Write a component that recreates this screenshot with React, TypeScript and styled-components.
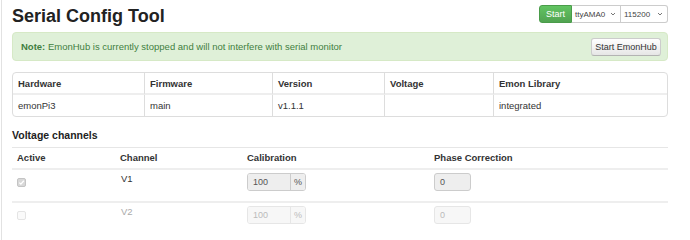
import React from "react";
import styled, { createGlobalStyle } from "styled-components";

const Global = createGlobalStyle`
  html, body { margin: 0; padding: 0; background: #fff; }
  body { font-family: "Liberation Sans", Arial, sans-serif; font-size: 9.5px; color: #333; }
  * { box-sizing: border-box; }
`;

const Page = styled.div`
  margin-left: 1px;
  border-left: 1px solid #e2e2e2;
  min-height: 240px;
  padding: 0 22px 0 10px;
`;

const Header = styled.div`
  display: flex;
  align-items: flex-start;
  justify-content: space-between;
  height: 32px;
`;

const Title = styled.h2`
  margin: 6px 0 0 0;
  font-size: 18px;
  line-height: 20px;
  font-weight: bold;
  color: #222;
`;

const Controls = styled.div`
  display: flex;
  margin-top: 5px;
`;

const StartButton = styled.button`
  height: 18px;
  width: 33px;
  padding: 0;
  border: 1px solid #4a9c4a;
  border-radius: 3px 0 0 3px;
  background: linear-gradient(#62c462, #51a351);
  color: #fff;
  font-family: inherit;
  font-size: 9px;
`;

const Select = styled.div<{ w: number }>`
  height: 18px;
  width: ${(p) => p.w}px;
  border: 1px solid #ccc;
  border-left: none;
  display: flex;
  align-items: center;
  justify-content: space-between;
  padding: 0 4px 0 3px;
  font-size: 8px;
  color: #444;
  background: #fff;
  &:last-child { border-radius: 0 3px 3px 0; }
`;

const Chevron = () => (
  <svg width="6" height="4" viewBox="0 0 6 4">
    <path d="M1 1 L3 3 L5 1" stroke="#777" strokeWidth="1" fill="none" />
  </svg>
);

const Alert = styled.div`
  height: 29px;
  background: #dff0d8;
  border: 1px solid #d6e9c6;
  border-radius: 4px;
  display: flex;
  align-items: center;
  justify-content: space-between;
  padding: 0 6px 0 8px;
  color: #3f7f3f;
  font-size: 9.5px;
`;

const AlertButton = styled.button`
  height: 18px;
  width: 70px;
  padding: 0;
  border: 1px solid #ccc;
  border-bottom-color: #b3b3b3;
  border-radius: 3px;
  background: linear-gradient(#ffffff, #e6e6e6);
  color: #333;
  font-family: inherit;
  font-size: 9px;
`;

const InfoTable = styled.table`
  margin-top: 11px;
  width: 100%;
  border-collapse: separate;
  border-spacing: 0;
  border: 1px solid #ddd;
  border-radius: 4px;
  table-layout: fixed;
`;

const InfoTh = styled.th<{ w?: number }>`
  text-align: left;
  font-weight: bold;
  height: 22px;
  padding: 0 5px;
  border-bottom: 2px solid #eee;
  ${(p) => (p.w ? `width: ${p.w}px;` : "")}
  & + & { border-left: 1px solid #ddd; }
`;

const InfoTd = styled.td`
  height: 21px;
  padding: 0 5px;
  & + & { border-left: 1px solid #ddd; }
`;

const SectionTitle = styled.h4`
  margin: 10px 0 0 0;
  font-size: 10.5px;
  line-height: 16px;
  font-weight: bold;
  color: #222;
`;

const ChanTable = styled.table`
  margin-top: 4px;
  width: 100%;
  border-collapse: collapse;
  table-layout: fixed;
`;

const ChanTh = styled.th<{ w?: number }>`
  text-align: left;
  font-weight: bold;
  height: 21px;
  padding: 0 5px;
  border-top: 1px solid #e6e6e6;
  ${(p) => (p.w ? `width: ${p.w}px;` : "")}
`;

const ChanTd = styled.td<{ off?: boolean }>`
  vertical-align: top;
  padding: 3px 5px 0 5px;
  height: 33px;
  border-top: 2px solid #eee;
  color: ${(p) => (p.off ? "#aaa" : "#333")};
`;

const ChanName = styled.div`
  line-height: 12px;
  padding-left: 1px;
`;

const Check = styled.span<{ checked?: boolean }>`
  display: block;
  margin-top: 5px;
  width: 9px;
  height: 9px;
  border: 1px solid ${(p) => (p.checked ? "#c4c4c4" : "#e4e4e4")};
  border-radius: 2px;
  background: ${(p) => (p.checked ? "#d8d8d8" : "#fafafa")};
`;

const CheckMark = () => (
  <svg width="7" height="7" viewBox="0 0 7 7" style={{ display: "block" }}>
    <path d="M1.3 3.6 L2.9 5.1 L5.8 1.8" stroke="#fff" strokeWidth="1.3" fill="none" />
  </svg>
);

const InputGroup = styled.div<{ off?: boolean }>`
  display: flex;
  width: 59px;
  height: 18px;
  border: 1px solid ${(p) => (p.off ? "#e6e6e6" : "#ccc")};
  border-radius: 3px;
  overflow: hidden;
  font-size: 9px;
  color: ${(p) => (p.off ? "#bbb" : "#555")};
`;

const InputField = styled.div<{ off?: boolean; w: number }>`
  width: ${(p) => p.w}px;
  background: ${(p) => (p.off ? "#f7f7f7" : "#eee")};
  padding-left: 5px;
  line-height: 16px;
`;

const Addon = styled.div<{ off?: boolean }>`
  flex: 1;
  border-left: 1px solid ${(p) => (p.off ? "#e6e6e6" : "#ccc")};
  background: ${(p) => (p.off ? "#f7f7f7" : "#eee")};
  text-align: center;
  line-height: 16px;
`;

const PhaseInput = styled.div<{ off?: boolean }>`
  width: 37px;
  height: 18px;
  border: 1px solid ${(p) => (p.off ? "#e6e6e6" : "#ccc")};
  border-radius: 3px;
  background: ${(p) => (p.off ? "#f7f7f7" : "#eee")};
  font-size: 9px;
  line-height: 16px;
  padding-left: 5px;
  color: ${(p) => (p.off ? "#bbb" : "#555")};
`;

const channels = [
  { name: "V1", active: true },
  { name: "V2", active: false },
];

export default function App() {
  return (
    <>
      <Global />
      <Page>
        <Header>
          <Title>Serial Config Tool</Title>
          <Controls>
            <StartButton>Start</StartButton>
            <Select w={49}>
              ttyAMA0 <Chevron />
            </Select>
            <Select w={47}>
              115200 <Chevron />
            </Select>
          </Controls>
        </Header>
        <Alert>
          <span>
            <b>Note:</b> EmonHub is currently stopped and will not interfere with serial monitor
          </span>
          <AlertButton>Start EmonHub</AlertButton>
        </Alert>
        <InfoTable>
          <thead>
            <tr>
              <InfoTh w={131}>Hardware</InfoTh>
              <InfoTh w={128}>Firmware</InfoTh>
              <InfoTh w={112}>Version</InfoTh>
              <InfoTh w={109}>Voltage</InfoTh>
              <InfoTh>Emon Library</InfoTh>
            </tr>
          </thead>
          <tbody>
            <tr>
              <InfoTd>emonPi3</InfoTd>
              <InfoTd>main</InfoTd>
              <InfoTd>v1.1.1</InfoTd>
              <InfoTd></InfoTd>
              <InfoTd>integrated</InfoTd>
            </tr>
          </tbody>
        </InfoTable>
        <SectionTitle>Voltage channels</SectionTitle>
        <ChanTable>
          <thead>
            <tr>
              <ChanTh w={103}>Active</ChanTh>
              <ChanTh w={127}>Channel</ChanTh>
              <ChanTh w={187}>Calibration</ChanTh>
              <ChanTh>Phase Correction</ChanTh>
            </tr>
          </thead>
          <tbody>
            {channels.map((c) => (
              <tr key={c.name}>
                <ChanTd off={!c.active}>
                  <Check checked={c.active}>{c.active && <CheckMark />}</Check>
                </ChanTd>
                <ChanTd off={!c.active}>
                  <ChanName>{c.name}</ChanName>
                </ChanTd>
                <ChanTd off={!c.active}>
                  <InputGroup off={!c.active}>
                    <InputField off={!c.active} w={42}>100</InputField>
                    <Addon off={!c.active}>%</Addon>
                  </InputGroup>
                </ChanTd>
                <ChanTd off={!c.active}>
                  <PhaseInput off={!c.active}>0</PhaseInput>
                </ChanTd>
              </tr>
            ))}
          </tbody>
        </ChanTable>
      </Page>
    </>
  );
}
